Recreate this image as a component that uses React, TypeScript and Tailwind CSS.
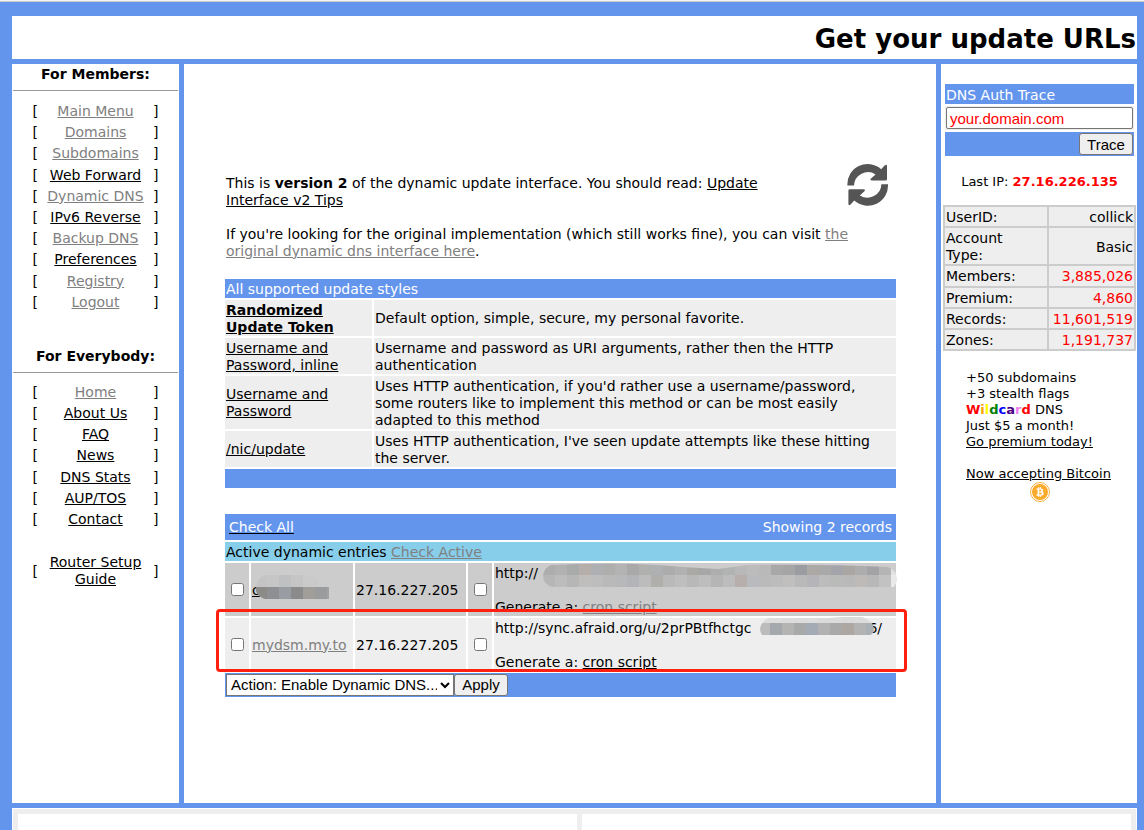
import { ReactNode } from "react";
import { FaBtc } from "react-icons/fa";

const memberLinks = [
  { label: "Main Menu", visited: true },
  { label: "Domains", visited: true },
  { label: "Subdomains", visited: true },
  { label: "Web Forward" },
  { label: "Dynamic DNS", visited: true },
  { label: "IPv6 Reverse" },
  { label: "Backup DNS", visited: true },
  { label: "Preferences" },
  { label: "Registry", visited: true },
  { label: "Logout", visited: true },
];

const everybodyLinks = [
  { label: "Home", visited: true },
  { label: "About Us" },
  { label: "FAQ" },
  { label: "News" },
  { label: "DNS Stats" },
  { label: "AUP/TOS" },
  { label: "Contact" },
];

const updateStyles = [
  {
    name: "Randomized Update Token",
    text: "Default option, simple, secure, my personal favorite.",
    bold: true,
  },
  {
    name: "Username and Password, inline",
    text: "Username and password as URI arguments, rather then the HTTP authentication",
  },
  {
    name: "Username and Password",
    text: "Uses HTTP authentication, if you'd rather use a username/password, some routers like to implement this method or can be most easily adapted to this method",
  },
  {
    name: "/nic/update",
    text: "Uses HTTP authentication, I've seen update attempts like these hitting the server.",
  },
];

const stats = [
  { label: "UserID:", value: "collick" },
  { label: "Account Type:", value: "Basic" },
  { label: "Members:", value: "3,885,026", red: true },
  { label: "Premium:", value: "4,860", red: true },
  { label: "Records:", value: "11,601,519", red: true },
  { label: "Zones:", value: "1,191,737", red: true },
];

function Link({ visited, children }: { visited?: boolean; children: ReactNode }) {
  return (
    <a href="#" className={visited ? "text-[#808080] underline" : "text-black underline"}>
      {children}
    </a>
  );
}

function NavItem({ label, visited }: { label: string; visited?: boolean }) {
  return (
    <li className="flex items-center justify-between">
      <span>[</span>
      <span className="w-[104px] text-center">
        <Link visited={visited}>{label}</Link>
      </span>
      <span>]</span>
    </li>
  );
}

function NavTitle({ children }: { children: ReactNode }) {
  return (
    <h2 className="mx-px border-b border-[#999] pb-[7px] pt-[2px] text-center font-bold">{children}</h2>
  );
}

// Coarse blocks painted over the private parts of an entry
function Mosaic({
  id,
  outline,
  rows,
  width,
  height,
  className,
}: {
  id: string;
  outline: string;
  rows: string[][];
  width: number;
  height: number;
  className: string;
}) {
  return (
    <svg className={className} width={width} height={height} aria-hidden="true">
      <clipPath id={id}>
        <path d={outline} />
      </clipPath>
      <g clipPath={`url(#${id})`} shapeRendering="crispEdges">
        {rows.map((row, y) =>
          row.map((fill, x) => (
            <rect key={`${y}-${x}`} x={x * 12} y={y * 12} width={12} height={12} fill={fill} />
          ))
        )}
      </g>
    </svg>
  );
}

const nameBlocks = [
  ["#c4c4c4", "#c6c6c6", "#bfc0c1", "#c5c5c6", "#cacaca", "#c7c8c9", "#cccccc"],
  ["#8c8b88", "#8d8f92", "#999ca3", "#8b8b8b", "#a19e9a", "#9a9b9d", "#a2a2a3"],
];

const urlBlocks = [
  "#adadad #b1b1b1 #a9abaa #b5aeaa #adafb3 #aeaeac #b3b3b3 #a9a9a9 #b0b0af #aeb0b2 #acacac #b1b1b1 #aaa9a5 #a7a7a8 #aeaeae #b1b3b2 #b8b8b8 #bcbcbc #b9b9b9 #a8a8a8 #a5a5a6 #9b9ca1 #aca8a6 #a9a9a9 #a3a5aa #a9a6a4 #adadad #a3a3a5 #b5b5b5 #e2e2e2".split(" "),
  "#b6b6b6 #bcbcbc #b6b6b6 #c0bebc #bdbdbd #b9b9b9 #b7b8b9 #b2b4b8 #bcbcbc #b1afac #b9b9b9 #bebebe #b8b8b8 #bdbdbd #b5b5b5 #bcbcbc #b7afac #b8babd #bababa #bcbcbc #c0bfbd #b9b9b9 #b5b5b9 #bcbcbc #b9bbb9 #b9b9b9 #bdbab8 #b8b8b8 #c2c2c2 #e9e9e9".split(" "),
];

const tokenBlocks = [
  ["#dcdcdc", "#dddddd", "#dcdcdc", "#dcdcdc", "#dddddd", "#dadada", "#dbdbdb", "#dadada", "#dbdbdb", "#dddddd"],
  ["#bcbcbc", "#a5a8ac", "#b4b4b2", "#a8aaa9", "#a5abb5", "#b2b2b2", "#aaa9a9", "#ada6a3", "#b3b3b3", "#aab0b3"],
];

function Entry({
  bg,
  label,
  host,
  url,
  visited,
}: {
  bg: string;
  label: string;
  host: ReactNode;
  url: ReactNode;
  visited?: boolean;
}) {
  return (
    <tr className={bg}>
      <td className="p-0">
        <div className="flex justify-center">
          <input type="checkbox" aria-label={`Select ${label}`} className="m-0 block size-[13px]" />
        </div>
      </td>
      <td className="px-px pb-0 pt-[2px]">{host}</td>
      <td className="px-px pb-0 pt-[2px]">27.16.227.205</td>
      <td className="p-0">
        <div className="flex justify-center">
          <input type="checkbox" aria-label={`Update ${label}`} className="m-0 block size-[13px]" />
        </div>
      </td>
      <td className="px-px pb-0 pt-[2px]">
        <div className="relative">{url}</div>
        <br />
        Generate a: <Link visited={visited}>cron script</Link>
      </td>
    </tr>
  );
}

function RefreshIcon() {
  return (
    <svg width="42" height="42" viewBox="0 0 42 42" fill="#555" className="mr-1.5 shrink-0" aria-hidden="true">
      <path
        id="arrow"
        d="M0.4 21.6A20.3 20.3 0 0 1 34.2 5.2L37.8 1.3Q40 -0.3 40 2V15.2Q40 16.6 38.6 16.6H25.2Q22.4 16.4 24 14.6L28.6 10.4A14 14 0 0 0 7 21.6Z"
      />
      <use href="#arrow" transform="rotate(180 20.7 20.9)" />
    </svg>
  );
}

export default function App() {
  return (
    <div className="flex min-h-screen flex-col border-t border-[#f4f4f4] bg-[#6495ed] font-['DejaVu_Sans',Verdana,sans-serif] text-[14px] leading-[17px] text-black">
      <div className="flex grow flex-col gap-[5px] border-t border-[#ccc] pl-3 pr-[7px] pt-[14px]">
        <header className="bg-white pb-[3px] pr-px pt-[7px] text-right">
          <h1 className="text-[26px] font-bold leading-[33px]">Get your update URLs</h1>
        </header>

        <div className="flex grow gap-[5px]">
          <nav className="w-[167px] shrink-0 bg-white">
            <NavTitle>For Members:</NavTitle>
            <ul className="mx-auto mt-[10px] grid h-[212px] w-[126px]">
              {memberLinks.map((link) => (
                <NavItem key={link.label} {...link} />
              ))}
            </ul>
            <div className="mt-[33px]">
              <NavTitle>For Everybody:</NavTitle>
            </div>
            <ul className="mx-auto mt-[9px] grid h-[148px] w-[126px]">
              {everybodyLinks.map((link) => (
                <NavItem key={link.label} {...link} />
              ))}
            </ul>
            <ul className="mx-auto mt-6 w-[126px]">
              <NavItem label="Router Setup Guide" />
            </ul>
          </nav>

          <main className="flex grow flex-col justify-center bg-white pb-[5px] pl-[39px] pr-[38px]">
            <div className="flex items-start px-[3px]">
              <p className="mt-[11px] grow basis-0 pr-8">
                This is <b>version 2</b> of the dynamic update interface. You should read:{" "}
                <Link>Update Interface v2 Tips</Link>
              </p>
              <RefreshIcon />
            </div>
            <p className="mt-[17px] px-[3px]">
              If you're looking for the original implementation (which still works fine), you can visit{" "}
              <Link visited>the original dynamic dns interface here</Link>.
            </p>

            <table className="mt-[17px] w-full table-fixed border-separate border-spacing-[2px]">
              <colgroup>
                <col className="w-[147px]" />
                <col />
              </colgroup>
              <thead>
                <tr className="bg-[#6495ed] text-white">
                  <th colSpan={2} className="px-px pb-0 pt-[2px] text-left font-normal">
                    All supported update styles
                  </th>
                </tr>
              </thead>
              <tbody>
                {updateStyles.map((style) => (
                  <tr key={style.name} className="bg-[#eee]">
                    <td className={style.bold ? "px-px pb-0 pt-[2px] font-bold" : "px-px pb-0 pt-[2px]"}>
                      <Link>{style.name}</Link>
                    </td>
                    <td className="px-px pb-0 pt-[2px]">{style.text}</td>
                  </tr>
                ))}
                <tr className="bg-[#6495ed]">
                  <td colSpan={2} className="h-[19px] p-0"></td>
                </tr>
              </tbody>
            </table>

            <form className="relative mt-[22px]">
              <table className="w-full table-fixed border-separate border-spacing-[2px]">
                <colgroup>
                  <col className="w-[24px]" />
                  <col className="w-[102px]" />
                  <col className="w-[111px]" />
                  <col className="w-[24px]" />
                  <col />
                </colgroup>
                <tbody>
                  <tr className="bg-[#6495ed] text-white">
                    <td colSpan={5} className="h-[26px] px-1 pb-0 pt-px">
                      <div className="flex justify-between">
                        <a href="#" className="underline decoration-black">
                          Check All
                        </a>
                        <span>Showing 2 records</span>
                      </div>
                    </td>
                  </tr>
                  <tr className="bg-[#87ceeb]">
                    <td colSpan={5} className="px-px pb-0 pt-[2px]">
                      Active dynamic entries <Link visited>Check Active</Link>
                    </td>
                  </tr>
                  <Entry
                    bg="bg-[#ccc]"
                    label="first entry"
                    visited
                    host={
                      <div className="relative">
                        <Link>c</Link>
                        <Mosaic
                          id="hostMask"
                          className="absolute -top-[7px] left-[3px]"
                          width={74}
                          height={24}
                          outline="M10 0H50L62 4V12H74V24H10Q3 22 1 16Q0 4 10 0Z"
                          rows={nameBlocks}
                        />
                      </div>
                    }
                    url={
                      <>
                        http://
                        <Mosaic
                          id="urlMask"
                          className="absolute -top-[2px] left-12"
                          width={355}
                          height={27}
                          outline="M8 2Q80 -2 140 4L175 6L205 2Q280 1 345 4Q355 8 354 18L350 26L346 24H10Q0 22 0 12Q2 4 8 2Z"
                          rows={urlBlocks}
                        />
                      </>
                    }
                  />
                  <Entry
                    bg="bg-[#eee]"
                    label="mydsm.my.to"
                    host={<Link visited>mydsm.my.to</Link>}
                    url={
                      <>
                        <div className="flex">
                          <span>http://sync.afraid.org/u/2prPBtfhctgc</span>
                          <span className="ml-auto mr-[13px]">6/</span>
                        </div>
                        <Mosaic
                          id="tokenMask"
                          className="absolute -top-[9px] left-[263px]"
                          width={117}
                          height={24}
                          outline="M10 7H70L84 6H104Q115 9 116 18Q116 23 112 24H4Q-2 15 10 7Z"
                          rows={tokenBlocks}
                        />
                      </>
                    }
                  />
                  <tr className="bg-[#6495ed]">
                    <td colSpan={5} className="p-px">
                      <div className="flex font-['Liberation_Sans',Arial,sans-serif] text-[15px] leading-[18px]">
                        <select
                          aria-label="Action"
                          className="h-[22px] w-[228px] border border-[#767676] bg-white"
                        >
                          <option>Action: Enable Dynamic DNS...</option>
                        </select>
                        <button
                          type="button"
                          className="h-[22px] w-[54px] rounded-[3px] border border-[#767676] bg-[#efefef]"
                        >
                          Apply
                        </button>
                      </div>
                    </td>
                  </tr>
                </tbody>
              </table>
              <div className="pointer-events-none absolute -left-[7px] -right-[9px] top-[97px] h-[63px] rounded-[4px] border-3 border-[#ff2010]"></div>
            </form>
          </main>

          <aside className="w-[196px] shrink-0 bg-white pl-[2px] pr-px pt-[18px]">
            <form>
              <table className="w-full border-separate border-spacing-[2px]">
                <tbody>
                  <tr className="bg-[#6495ed] text-white">
                    <td className="h-5 px-px pb-0 pt-[2px]">
                      <label htmlFor="trace">DNS Auth Trace</label>
                    </td>
                  </tr>
                  <tr className="bg-[#eee]">
                    <td className="p-px">
                      <input
                        id="trace"
                        type="text"
                        defaultValue="your.domain.com"
                        className="block h-[22px] w-full rounded-[2px] border border-[#767676] bg-white px-[3px] font-['Liberation_Sans',Arial,sans-serif] text-[15px] text-[#f00]"
                      />
                    </td>
                  </tr>
                  <tr className="bg-[#6495ed]">
                    <td className="p-px">
                      <button
                        type="button"
                        className="ml-auto block h-[22px] w-[54px] rounded-[3px] border border-[#767676] bg-[#efefef] font-['Liberation_Sans',Arial,sans-serif] text-[15px]"
                      >
                        Trace
                      </button>
                    </td>
                  </tr>
                </tbody>
              </table>
            </form>

            <p className="mt-[15px] text-center text-[13px]">
              Last IP: <b className="text-[#f00]">27.16.226.135</b>
            </p>

            <table className="mt-[15px] h-[146px] w-full table-fixed border-separate border-spacing-[2px] bg-[#ccc]">
              <colgroup>
                <col className="w-[102px]" />
                <col />
              </colgroup>
              <tbody>
                {stats.map((stat) => (
                  <tr key={stat.label} className="bg-[#eee]">
                    <td className="pb-0 pl-px pr-3 pt-[2px]">{stat.label}</td>
                    <td
                      className={
                        stat.red
                          ? "px-px pb-0 pt-[2px] text-right text-[#f00]"
                          : "px-px pb-0 pt-[2px] text-right"
                      }
                    >
                      {stat.value}
                    </td>
                  </tr>
                ))}
              </tbody>
            </table>

            <div className="mt-[19px] pl-[23px] text-[13px] leading-[16px]">
              <p>+50 subdomains</p>
              <p>+3 stealth flags</p>
              <p>
                <b>
                  <span className="text-[#f00]">W</span>
                  <span className="text-[#ffa500]">i</span>
                  <span className="text-[#ff0]">l</span>
                  <span className="text-[#008000]">d</span>
                  <span className="text-[#00f]">c</span>
                  <span className="text-[#4b0082]">a</span>
                  <span className="text-[#ee82ee]">r</span>
                  <span className="text-[#f00]">d</span>
                </b>{" "}
                DNS
              </p>
              <p>Just $5 a month!</p>
              <p>
                <Link>Go premium today!</Link>
              </p>
              <p className="mt-4">
                <Link>Now accepting Bitcoin</Link>
              </p>
            </div>
            <div className="flex justify-center">
              <div className="flex size-5 items-center justify-center rounded-full border border-[#fbb040] bg-white">
                <div className="flex size-4 items-center justify-center rounded-full bg-[#fbab2c]">
                  <FaBtc size={10} color="#fff" />
                </div>
              </div>
            </div>
          </aside>
        </div>

        <footer className="flex h-[22px] shrink-0 bg-white px-px pt-px">
          <div className="grid grow grid-cols-[56fr_55fr] gap-[5px] bg-[#eee] px-[5px] pt-[5px]">
            <div className="bg-white"></div>
            <div className="bg-white"></div>
          </div>
        </footer>
      </div>
    </div>
  );
}
